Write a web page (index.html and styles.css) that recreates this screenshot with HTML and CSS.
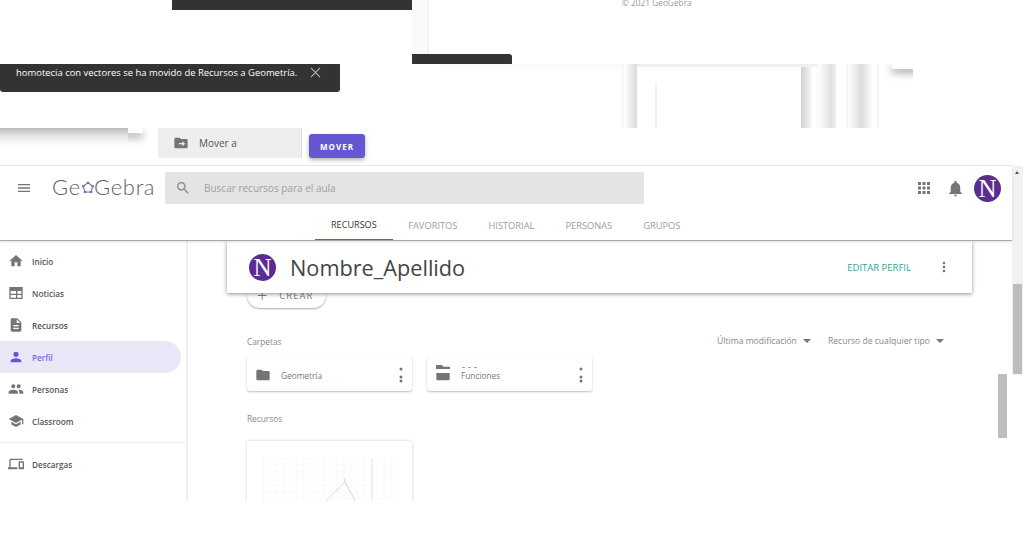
FILE: index.html
```html
<!DOCTYPE html>
<html lang="es">
<head>
<meta charset="utf-8">
<title>GeoGebra</title>
<link rel="stylesheet" href="styles.css">
</head>
<body>
<svg class="defs" width="0" height="0" aria-hidden="true">
  <symbol id="i-menu" viewBox="0 0 24 24"><path d="M3 18h18v-2H3v2zm0-5h18v-2H3v2zm0-7v2h18V6H3z"/></symbol>
  <symbol id="i-search" viewBox="0 0 24 24"><path d="M15.5 14h-.79l-.28-.27C15.41 12.59 16 11.11 16 9.5 16 5.91 13.09 3 9.5 3S3 5.91 3 9.5 5.91 16 9.5 16c1.61 0 3.09-.59 4.23-1.57l.27.28v.79l5 4.99L20.49 19l-4.99-5zm-6 0C7.01 14 5 11.99 5 9.5S7.01 5 9.5 5 14 7.01 14 9.5 11.99 14 9.5 14z"/></symbol>
  <symbol id="i-apps" viewBox="0 0 24 24"><path d="M4 8h4V4H4v4zm6 12h4v-4h-4v4zm-6 0h4v-4H4v4zm0-6h4v-4H4v4zm6 0h4v-4h-4v4zm6-10v4h4V4h-4zm-6 4h4V4h-4v4zm6 6h4v-4h-4v4zm0 6h4v-4h-4v4z"/></symbol>
  <symbol id="i-bell" viewBox="0 0 24 24"><path d="M12 22c1.1 0 2-.9 2-2h-4c0 1.1.9 2 2 2zm6-6v-5c0-3.07-1.63-5.64-4.5-6.32V4c0-.83-.67-1.5-1.5-1.5s-1.5.67-1.5 1.5v.68C7.64 5.36 6 7.92 6 11v5l-2 2v1h16v-1l-2-2z"/></symbol>
  <symbol id="i-home" viewBox="0 0 24 24"><path d="M10 20v-6h4v6h5v-8h3L12 3 2 12h3v8z"/></symbol>
  <symbol id="i-news" viewBox="0 0 24 24"><path fill-rule="evenodd" d="M2 3h20v18H2zM4 9v4h8V9zm0 6v4h8v-4zm10-6v4h6V9zm0 6v4h6v-4z"/></symbol>
  <symbol id="i-doc" viewBox="0 0 24 24"><path d="M14 2H6c-1.1 0-1.99.9-1.99 2L4 20c0 1.1.89 2 1.99 2H18c1.1 0 2-.9 2-2V8l-6-6zm2 16H8v-2h8v2zm0-4H8v-2h8v2zm-3-5V3.500L18.500 9H13z"/></symbol>
  <symbol id="i-person" viewBox="0 0 24 24"><path d="M12 12c2.210 0 4-1.790 4-4s-1.790-4-4-4-4 1.790-4 4 1.790 4 4 4zm0 2c-2.670 0-8 1.340-8 4v2h16v-2c0-2.660-5.330-4-8-4z"/></symbol>
  <symbol id="i-people" viewBox="0 0 24 24"><path d="M16 11c1.660 0 2.990-1.340 2.990-3S17.660 5 16 5c-1.660 0-3 1.340-3 3s1.340 3 3 3zm-8 0c1.660 0 2.990-1.340 2.990-3S9.660 5 8 5C6.340 5 5 6.340 5 8s1.340 3 3 3zm0 2c-2.330 0-7 1.170-7 3.500V19h14v-2.500c0-2.330-4.670-3.500-7-3.500zm8 0c-.29 0-.62.02-.97.05 1.160.84 1.970 1.970 1.970 3.450V19h6v-2.500c0-2.330-4.670-3.500-7-3.500z"/></symbol>
  <symbol id="i-school" viewBox="0 0 24 24"><path d="M5 13.180v4L12 21l7-3.820v-4L12 17l-7-3.820zM12 3L1 9l11 6 9-4.910V17h2V9L12 3z"/></symbol>
  <symbol id="i-devices" viewBox="0 0 24 24"><path d="M4 6h18V4H4c-1.100 0-2 .9-2 2v11H0v3h14v-3H4V6zm19 2h-6c-.55 0-1 .45-1 1v10c0 .55.45 1 1 1h6c.55 0 1-.45 1-1V9c0-.55-.45-1-1-1zm-1 9h-4v-7h4v7z"/></symbol>
  <symbol id="i-folder" viewBox="0 0 24 24"><path d="M10 4H4c-1.100 0-1.990.9-1.990 2L2 18c0 1.100.9 2 2 2h16c1.100 0 2-.9 2-2V8c0-1.100-.9-2-2-2h-8l-2-2z"/></symbol>
  <symbol id="i-move" viewBox="0 0 24 24"><path fill-rule="evenodd" d="M10 4H4c-1.100 0-1.990.9-1.990 2L2 18c0 1.100.9 2 2 2h16c1.100 0 2-.9 2-2V8c0-1.100-.9-2-2-2h-8l-2-2zm4 5l4 4-4 4v-3H9v-2h5V9z"/></symbol>
  <symbol id="i-more" viewBox="0 0 24 24"><path d="M12 8c1.100 0 2-.9 2-2s-.9-2-2-2-2 .9-2 2 .9 2 2 2zm0 2c-1.100 0-2 .9-2 2s.9 2 2 2 2-.9 2-2-.9-2-2-2zm0 6c-1.100 0-2 .9-2 2s.9 2 2 2 2-.9 2-2-.9-2-2-2z"/></symbol>
  <symbol id="i-more-torn" viewBox="0 0 16 16"><circle cx="8" cy="2" r="1.500"/><circle cx="8" cy="10" r="1.500"/><circle cx="8" cy="14" r="1.500"/></symbol>
</svg>

<div class="page">
  <div class="glitch">
    <div class="frag frag-dark-top"></div>
    <div class="frag frag-strip"></div>
    <div class="frag frag-dark-tab"></div>
    <div class="frag frag-fade"></div>
    <p class="frag copyright">© 2021 GeoGebra</p>
    <div class="frag toast">
      <span>homotecia con vectores se ha movido de Recursos a Geometría.</span>
      <svg class="toast-x" viewBox="0 0 12 12"><path d="M1 1l10 10M11 1L1 11"/></svg>
    </div>
    <div class="frag frag-shadow-left"></div>
    <div class="frag corner-clip-left"><div class="corner-block-left"></div></div>
    <div class="frag move-field">
      <svg class="icon move-icon"><use href="#i-move"/></svg>
      <span>Mover a</span>
    </div>
    <button class="frag move-btn">MOVER</button>
    <div class="frag frag-card-top"></div>
    <div class="frag frag-card-left"></div>
    <div class="frag frag-card"><span class="frag-tick"></span></div>
    <div class="frag frag-card-right"></div>
    <div class="frag frag-stripes"></div>
    <div class="frag corner-clip-right"><div class="corner-block-right"></div></div>
  </div>

  <div class="app">
    <header class="header">
      <div class="topbar">
        <svg class="icon menu-icon"><use href="#i-menu"/></svg>
        <div class="logo">
          <span>Ge</span>
          <svg class="logo-mark" viewBox="0 0 16 16">
            <path d="M8 2l5.500 4-2 6.500h-7l-2-6.500z"/>
            <circle cx="8" cy="2" r="1.500"/><circle cx="13.500" cy="6" r="1.500"/><circle cx="11.500" cy="12.500" r="1.500"/><circle cx="4.500" cy="12.500" r="1.500"/><circle cx="2.500" cy="6" r="1.500"/>
          </svg>
          <span>Gebra</span>
        </div>
        <div class="search">
          <svg class="icon search-icon"><use href="#i-search"/></svg>
          <span>Buscar recursos para el aula</span>
        </div>
        <div class="top-actions">
          <svg class="icon apps-icon"><use href="#i-apps"/></svg>
          <svg class="icon bell-icon"><use href="#i-bell"/></svg>
          <div class="avatar avatar-top">N</div>
        </div>
      </div>
      <nav class="tabs">
        <span class="tab tab-active">RECURSOS</span>
        <span class="tab">FAVORITOS</span>
        <span class="tab">HISTORIAL</span>
        <span class="tab">PERSONAS</span>
        <span class="tab">GRUPOS</span>
      </nav>
    </header>

    <div class="body">
      <aside class="sidebar">
        <a class="nav-item"><svg class="icon nav-icon"><use href="#i-home"/></svg>Inicio</a>
        <a class="nav-item"><svg class="icon nav-icon"><use href="#i-news"/></svg>Noticias</a>
        <a class="nav-item"><svg class="icon nav-icon"><use href="#i-doc"/></svg>Recursos</a>
        <a class="nav-item nav-active"><svg class="icon nav-icon"><use href="#i-person"/></svg>Perfil</a>
        <a class="nav-item"><svg class="icon nav-icon"><use href="#i-people"/></svg>Personas</a>
        <a class="nav-item"><svg class="icon nav-icon"><use href="#i-school"/></svg>Classroom</a>
        <hr class="nav-sep">
        <a class="nav-item"><svg class="icon nav-icon"><use href="#i-devices"/></svg>Descargas</a>
      </aside>

      <main class="main">
        <div class="profile-bar">
          <div class="avatar avatar-big">N</div>
          <h1 class="profile-name">Nombre_Apellido</h1>
          <span class="edit-link">EDITAR PERFIL</span>
          <svg class="icon profile-more"><use href="#i-more"/></svg>
        </div>

        <div class="create-btn"><span class="plus">+</span>CREAR</div>

        <div class="folders-head">
          <span class="label">Carpetas</span>
          <div class="filters">
            <span class="filter">Última modificación<i class="caret"></i></span>
            <span class="filter">Recurso de cualquier tipo<i class="caret"></i></span>
          </div>
        </div>

        <div class="folders">
          <div class="folder-card">
            <svg class="icon folder-icon"><use href="#i-folder"/></svg>
            <span class="folder-name">Geometría</span>
            <svg class="icon folder-more"><use href="#i-more-torn"/></svg>
          </div>
          <div class="folder-card">
            <svg class="icon folder-icon"><use href="#i-folder"/></svg>
            <span class="folder-name">Funciones</span>
            <svg class="icon folder-more"><use href="#i-more-torn"/></svg>
            <div class="tear"></div>
            <div class="ghost-folder"></div>
            <div class="ghost-text"><i></i><i></i><i></i></div>
          </div>
        </div>

        <div class="label res-label">Recursos</div>
        <div class="res-card">
          <svg class="thumb" viewBox="0 0 133 60">
            <defs>
              <pattern id="grid" width="6.700" height="6.700" patternUnits="userSpaceOnUse">
                <path d="M6.700 0H0V6.700" class="grid-line"/>
              </pattern>
            </defs>
            <rect width="133" height="60" fill="url(#grid)"/>
            <path class="axis" d="M109 0V60"/>
            <path class="seg-red" d="M82 24L60 46"/>
            <path class="seg-blue" d="M82 24L94 46M82 24V20"/>
          </svg>
        </div>
      </main>
    </div>

    <div class="scroll-track"><span class="scroll-arrow"></span><span class="scroll-thumb"></span></div>
    <div class="scroll-ghost"></div>
  </div>
</div>
</body>
</html>
```

FILE: styles.css
```css
* { box-sizing: border-box; }
html, body { margin: 0; padding: 0; background: #fff; }
body {
  width: 1033px;
  height: 559px;
  overflow: hidden;
  font-family: "Open Sans", "Noto Sans", sans-serif;
  color: #444;
}
.defs { position: absolute; }
.icon { display: block; fill: #757575; flex: none; }
.page { width: 1033px; height: 559px; }

/* Broken repaint fragments above the app */
.glitch { position: relative; height: 165px; overflow: hidden; }
.frag { position: absolute; margin: 0; }
.frag-dark-top { left: 172px; top: 0; width: 240px; height: 10px; background: #333; }
.frag-strip { left: 412px; top: 0; width: 17px; height: 54px; background: #fafafa; border-right: 1px solid #eee; }
.frag-dark-tab { left: 412px; top: 54px; width: 100px; height: 10px; background: #333; border-radius: 0 3px 0 0; }
.frag-fade { left: 440px; top: 64px; width: 182px; height: 8px; background: linear-gradient(#f8f8f8, #fff); }
.copyright { left: 622px; top: -3px; font-size: 8.300px; line-height: 11px; color: #9a9a9a; }
.toast {
  left: 0; top: 64px; width: 340px; height: 28px;
  background: #333; border-radius: 0 0 3px 3px;
  color: #fff; font-size: 9.450px; line-height: 18px; padding-left: 16px;
  display: flex; align-items: flex-start;
}
.toast-x { position: absolute; left: 310px; top: 3px; width: 11px; height: 11px; fill: none; stroke: #bbb; stroke-width: 1.100; }
.frag-shadow-left { left: 0; top: 128px; width: 128px; height: 18px; background: linear-gradient(#bbb, #e6e6e6 8px, #fff); }
.corner-clip-left { left: 128px; top: 128px; width: 30px; height: 22px; overflow: hidden; }
.corner-block-left { width: 25px; height: 5px; margin-left: -10px; background: #fff; box-shadow: 0 4px 8px rgba(0,0,0,.45); }
.move-field {
  left: 158px; top: 128px; width: 144px; height: 30px;
  background: #eee; border-right: 1px solid #ddd;
  display: flex; align-items: center; gap: 10px; padding-left: 15px;
  font-size: 10px; color: #555;
}
.move-icon { width: 16px; height: 16px; }
.move-btn {
  left: 309px; top: 134px; width: 56px; height: 24px;
  border: 0; border-radius: 3px; padding: 0;
  background: #6557d2; color: #fff;
  font: 700 8px "Open Sans", sans-serif; letter-spacing: 1px;
  box-shadow: 0 2px 4px rgba(0,0,0,.3);
}
.frag-card-top { left: 622px; top: 64px; width: 195px; height: 3px; background: #f0f0f0; }
.frag-card-left { left: 622px; top: 64px; width: 15px; height: 64px; background: linear-gradient(90deg, #eee 0, #fff 2px, #dcdcdc 14px); }
.frag-card { left: 637px; top: 67px; width: 164px; height: 61px; background: #fff; }
.frag-tick { display: block; position: absolute; left: 18px; top: 15px; width: 2px; height: 46px; background: #f1f1f1; }
.frag-card-right { left: 801px; top: 67px; width: 12px; height: 61px; background: linear-gradient(90deg, #cfcfcf, #fff); }
.frag-stripes {
  left: 817px; top: 64px; width: 75px; height: 64px;
  background: linear-gradient(90deg, #f0f0f0 0, #fff 1px, #e0e0e0 14px, #eee 18px, #fff 20px, #fff 29px, #eee 30px, #fff 31px, #dcdcdc 44px, #e6e6e6 48px, #fff 56px, #fff 60px, #e8e8e8 61px, #fff 62px);
}
.corner-clip-right { left: 877px; top: 64px; width: 36px; height: 28px; overflow: hidden; }
.corner-block-right { width: 60px; height: 5px; margin-left: 15px; background: #fff; box-shadow: 0 3px 8px rgba(0,0,0,.5); }

/* App */
.app { position: relative; width: 1012px; height: 336px; border-top: 1px solid #e8e8e8; }
.header { height: 75px; border-bottom: 1px solid #a8a8a8; box-shadow: 0 1px 2px rgba(0,0,0,.12); position: relative; z-index: 2; background: #fff; }
.topbar { display: flex; align-items: center; height: 44px; padding-left: 16px; padding-right: 11px; }
.menu-icon { width: 16px; height: 16px; }
.logo { display: flex; align-items: center; margin-left: 20px; width: 113px; padding-bottom: 3px; font-family: "Lato", "Open Sans", sans-serif; font-weight: 300; font-size: 22px; color: #5f5f5f; letter-spacing: .7px; }
.logo-mark { width: 14px; height: 14px; margin: 2px -1px 0 0; fill: #7a6fd0; stroke: none; }
.logo-mark path { fill: none; stroke: #777; stroke-width: 1.200; }
.search {
  display: flex; align-items: center;
  width: 479px; height: 32px; background: #e4e4e4; border-radius: 2px;
  padding-left: 10px; font-size: 10px; color: #a0a0a0;
}
.search-icon { width: 16px; height: 16px; margin-right: 13px; fill: #8a8a8a; }
.top-actions { display: flex; align-items: center; margin-left: auto; }
.apps-icon { width: 18px; height: 18px; }
.bell-icon { width: 19px; height: 19px; margin-left: 13px; }
.avatar {
  display: flex; align-items: center; justify-content: center;
  border-radius: 50%; background: #5c2d91; color: #fff;
  font-family: "Liberation Serif", serif;
}
.avatar-top { width: 27px; height: 27px; font-size: 25px; line-height: 27px; margin-left: 9px; }
.tabs { display: flex; height: 30px; padding-left: 315px; }
.tab { display: flex; align-items: center; padding: 0 15.500px; font-size: 9.300px; color: #9e9e9e; height: 30px; }
.tab-active { color: #333; font-size: 9.100px; padding: 0 16px; border-bottom: 1px solid #6557d2; }

.body { display: flex; height: 260px; }
.sidebar { width: 188px; flex: none; border-right: 2px solid #f0f0f0; padding-top: 4px; }
.nav-item {
  display: flex; align-items: center; height: 32px; width: 181px;
  padding-left: 8px; font-size: 8.200px; font-weight: 600; color: #555;
  border-radius: 0 16px 16px 0;
}
.nav-icon { width: 16px; height: 16px; margin-right: 8px; }
.nav-active { background: #ebe7f9; color: #7a68dc; }
.nav-active .nav-icon { fill: #6557d2; }
.nav-sep { border: 0; border-top: 1px solid #eee; margin: 5px 0 5px; width: 186px; }

.main { position: relative; flex: 1; overflow: hidden; padding-left: 59px; padding-right: 41px; padding-top: 41px; }
.profile-bar {
  position: absolute; left: 39px; top: 0; width: 745px; height: 52px;
  background: #fff; box-shadow: 0 1px 4px rgba(0,0,0,.45);
  display: flex; align-items: center; padding-left: 22px; padding-right: 20px; z-index: 1;
}
.avatar-big { width: 27px; height: 27px; font-size: 25px; line-height: 27px; }
.profile-name { margin: 0 0 0 14px; font-size: 21.700px; font-weight: 400; color: #444; }
.edit-link { margin-left: auto; font-size: 9.500px; color: #2fa58f; }
.profile-more { width: 16px; height: 16px; margin-left: 25px; }
.create-btn {
  display: flex; align-items: center; width: 79px; height: 26px;
  border-radius: 13px; background: #fff;
  box-shadow: 0 1px 2px rgba(0,0,0,.35);
  padding-left: 10px; font-size: 9.500px; letter-spacing: 1px; color: #777;
}
.plus { font-size: 18px; margin-right: 11px; font-weight: 300; }
.folders-head { display: flex; align-items: center; justify-content: space-between; margin-top: 25px; padding-right: 27px; height: 16px; }
.label { font-size: 8.300px; color: #888; }
.filters { display: flex; gap: 17px; }
.filter { display: flex; align-items: center; font-size: 8.600px; color: #888; }
.caret { width: 0; height: 0; margin-left: 6px; border: 4px solid transparent; border-top: 4px solid #757575; border-bottom: 0; }
.folders { display: flex; gap: 15px; margin-top: 7px; }
.folder-card {
  position: relative; display: flex; align-items: center;
  width: 165px; height: 35px; border-radius: 3px; padding: 3px 0 0 8px;
  box-shadow: 0 1px 2px rgba(0,0,0,.25);
}
.folder-icon { width: 16px; height: 16px; }
.folder-name { margin: 2px 0 0 10px; font-size: 8.300px; color: #777; line-height: 12px; }
.folder-more { width: 16px; height: 16px; margin-left: auto; margin-right: 3px; margin-top: -1px; }
.tear { position: absolute; left: 8px; top: 13px; width: 20px; height: 4px; background: #fff; }
.ghost-folder { position: absolute; left: 9px; top: 9px; width: 14px; height: 4px; background: #757575; border-radius: 1px 3px 0 0; clip-path: polygon(0 0, 40% 0, 55% 45%, 100% 45%, 100% 100%, 0 100%); }
.ghost-text { position: absolute; left: 35px; top: 11px; display: flex; gap: 3px; }
.ghost-text i { display: block; width: 3px; height: 1px; background: #aaa; }
.res-label { margin-top: 22px; }
.res-card {
  width: 165px; height: 70px; margin-top: 17px; padding: 17px 16px 0;
  box-shadow: 0 0 3px rgba(0,0,0,.2); border-radius: 2px;
}
.thumb { display: block; width: 133px; height: 60px; }
.grid-line { fill: none; stroke: #f1f1f4; stroke-width: .6; }
.axis { stroke: #d8d8d8; stroke-width: .7; fill: none; }
.seg-red { stroke: #ecc8c8; stroke-width: .8; fill: none; }
.seg-blue { stroke: #c2c6ea; stroke-width: .8; fill: none; }

.scroll-track { position: absolute; left: 1012px; top: 0; width: 11px; height: 209px; background: #f1f1f1; }
.scroll-arrow { position: absolute; left: 3px; top: 5px; border: 2.500px solid transparent; border-bottom: 3px solid #555; border-top: 0; }
.scroll-thumb { position: absolute; left: 1px; top: 118px; width: 9px; height: 90px; background: #bdbdbd; }
.scroll-ghost { position: absolute; left: 998px; top: 208px; width: 9px; height: 64px; background: #bdbdbd; }
```
